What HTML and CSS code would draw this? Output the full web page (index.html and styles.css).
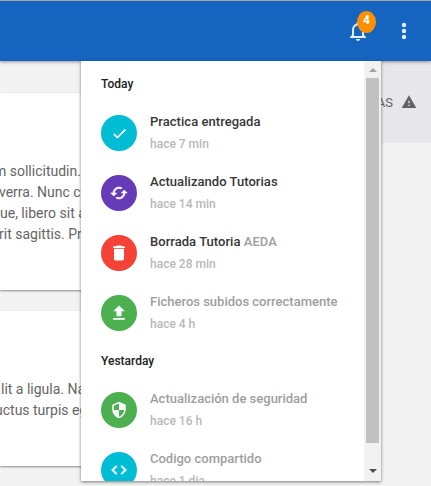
FILE: index.html
```html
<!DOCTYPE html>
<html lang="es">
<head>
<meta charset="utf-8">
<title>Notificaciones</title>
<link rel="stylesheet" href="styles.css">
</head>
<body>
<header class="topbar">
  <div class="bell">
    <svg width="24" height="24" viewBox="0 0 24 24"><path d="M12 22c1.100 0 2-.9 2-2h-4c0 1.100.9 2 2 2zm6-6v-5c0-3.070-1.630-5.640-4.500-6.320V4c0-.83-.67-1.500-1.500-1.500s-1.500.67-1.500 1.500v.68C7.640 5.360 6 7.920 6 11v5l-2 2v1h16v-1l-2-2zm-2 1H8v-6c0-2.480 1.510-4.500 4-4.500s4 2.020 4 4.500v6z"/></svg>
    <span class="badge">4</span>
  </div>
  <svg class="more" width="24" height="24" viewBox="0 0 24 24"><circle cx="12" cy="6" r="2.200"/><circle cx="12" cy="12" r="2.200"/><circle cx="12" cy="18" r="2.200"/></svg>
</header>
<main class="page">
  <div class="cards">
    <article class="card first">
      <p class="a1">m sollicitudin.</p>
      <p class="a2">verra. Nunc cursus</p>
      <p class="a3">ue, libero sit amet</p>
      <p class="a4">rit sagittis. Praesent</p>
    </article>
    <article class="card second">
      <p class="b1">lit a ligula. Nam</p>
      <p class="b2">uctus turpis eget</p>
    </article>
  </div>
  <aside class="tab"><span>AS</span><svg width="16" height="16" viewBox="0 0 24 24"><path d="M1 21h22L12 2 1 21zm12-3h-2v-2h2v2zm0-4h-2v-4h2v4z"/></svg></aside>
</main>
<section class="menu">
  <div class="list">
    <h2>Today</h2>
    <div class="item">
      <span class="avatar cyan"><svg class="bold check" viewBox="0 0 24 24"><path d="M9 16.170L4.830 12l-1.420 1.410L9 19 21 7l-1.410-1.410z"/></svg></span>
      <div><h3>Practica entregada</h3><time>hace 7 min</time></div>
    </div>
    <div class="item">
      <span class="avatar purple"><svg class="bold" viewBox="0 0 24 24"><path d="M19 8l-4 4h3c0 3.310-2.690 6-6 6-1.010 0-1.970-.25-2.800-.7l-1.460 1.460C8.970 19.540 10.430 20 12 20c4.420 0 8-3.580 8-8h3l-4-4zM6 12c0-3.310 2.690-6 6-6 1.010 0 1.970.25 2.800.7l1.460-1.460C15.030 4.460 13.570 4 12 4c-4.420 0-8 3.580-8 8H1l4 4 4-4H6z"/></svg></span>
      <div><h3>Actualizando Tutorias</h3><time>hace 14 min</time></div>
    </div>
    <div class="item">
      <span class="avatar red"><svg class="large" viewBox="0 0 24 24"><path d="M6 19c0 1.100.9 2 2 2h8c1.100 0 2-.9 2-2V7H6v12zM19 4h-3.500l-1-1h-5l-1 1H5v2h14V4z"/></svg></span>
      <div><h3>Borrada Tutoria <span>AEDA</span></h3><time>hace 28 min</time></div>
    </div>
    <div class="item read">
      <span class="avatar green"><svg class="large" viewBox="0 0 24 24"><path d="M9 16h6v-6h4l-7-7-7 7h4zm-4 2h14v2H5z"/></svg></span>
      <div><h3>Ficheros subidos correctamente</h3><time>hace 4 h</time></div>
    </div>
    <h2 class="next">Yestarday</h2>
    <div class="item read">
      <span class="avatar green"><svg viewBox="0 0 24 24"><path d="M12 1L3 5v6c0 5.550 3.840 10.740 9 12 5.160-1.260 9-6.450 9-12V5l-9-4zm0 10.990h7c-.53 4.120-3.280 7.790-7 8.940V12H5V6.300l7-3.110v8.800z"/></svg></span>
      <div><h3>Actualización de seguridad</h3><time>hace 16 h</time></div>
    </div>
    <div class="item read">
      <span class="avatar cyan"><svg class="bold" viewBox="0 0 24 24"><path d="M9.400 16.600L4.800 12l4.600-4.600L8 6l-6 6 6 6 1.400-1.400zm5.200 0l4.600-4.600-4.600-4.600L16 6l6 6-6 6-1.400-1.400z"/></svg></span>
      <div><h3>Codigo compartido</h3><time>hace 1 dia</time></div>
    </div>
  </div>
  <div class="scrollbar">
    <svg class="up" width="8" height="4" viewBox="0 0 8 4"><path d="M0 4L4 0l4 4z"/></svg>
    <div class="thumb"></div>
    <svg class="down" width="8" height="4" viewBox="0 0 8 4"><path d="M0 0h8L4 4z"/></svg>
  </div>
</section>
</body>
</html>
```

FILE: styles.css
```css
* { box-sizing: border-box; }
body {
  margin: 0;
  width: 431px;
  height: 486px;
  overflow: hidden;
  position: relative;
  background: #f2f2f2;
  font-family: Roboto, "Liberation Sans", sans-serif;
}
h2, h3, p { margin: 0; }
svg { display: block; flex: none; }

.topbar {
  position: relative;
  z-index: 1;
  height: 61px;
  border-top: 1px solid #a9a9a9;
  padding-right: 15px;
  display: flex;
  align-items: center;
  justify-content: flex-end;
  gap: 22px;
  background: #1565c0;
  box-shadow: 0 1px 3px rgba(0, 0, 0, .4);
}
.topbar svg { fill: #e3edf8; }
.bell { position: relative; }
.badge {
  position: absolute;
  left: 11px;
  top: -8px;
  width: 19px;
  height: 22px;
  border-radius: 50%;
  background: #ff8f00;
  color: #fff;
  font-size: 12px;
  font-weight: 700;
  line-height: 19px;
  text-align: center;
}

.page { display: flex; justify-content: space-between; height: 425px; }
.cards { width: 200px; padding-top: 32px; }
.card {
  background: #fff;
  box-shadow: 0 1px 2px rgba(0, 0, 0, .42);
  color: #656565;
  font-size: 14px;
  line-height: 21px;
  white-space: nowrap;
  overflow: hidden;
}
.first { height: 197px; padding-top: 68px; }
.second { height: 155px; padding-top: 68px; margin-top: 21px; }
.a1 { text-indent: -6px; }
.a2 { text-indent: -1px; }
.a3 { text-indent: 0; }
.a4 { text-indent: -1px; }
.b1 { text-indent: 1px; }
.b2 { text-indent: -5px; }
.tab {
  width: 61px;
  height: 82px;
  padding-right: 14px;
  display: flex;
  align-items: center;
  justify-content: flex-end;
  gap: 8px;
  background: #e7e7e9;
  color: #656565;
  font-size: 13px;
}
.tab svg { fill: #626262; }

.menu {
  position: absolute;
  z-index: 2;
  left: 81px;
  top: 61px;
  width: 300px;
  height: 420px;
  display: flex;
  background: #fff;
  box-shadow: 0 1px 3px rgba(0, 0, 0, .5);
}
.list { flex: 1; height: 420px; overflow: hidden; padding-left: 20px; }
.list h2 {
  height: 45px;
  padding-top: 15px;
  color: #212121;
  font-size: 12px;
  font-weight: 500;
  line-height: 16px;
}
.list .next { height: 37px; padding-top: 7px; }
.item { height: 60px; display: flex; gap: 13px; padding-top: 9px; white-space: nowrap; }
.avatar {
  width: 36px;
  height: 36px;
  border-radius: 50%;
  display: flex;
  align-items: center;
  justify-content: center;
}
.avatar svg { width: 18px; height: 18px; fill: #fff; }
.avatar .bold { stroke: #fff; stroke-width: .8; }
.avatar .check { width: 17px; height: 17px; stroke-width: .5; }
.avatar .large { width: 20px; height: 20px; }
.cyan { background: #00bcd4; }
.purple { background: #673ab7; }
.red { background: #f44336; }
.green { background: #4caf50; }
.item h3 { color: #363636; font-size: 13px; font-weight: 500; line-height: 14px; letter-spacing: .04px; }
.item h3 span, .read h3 { color: #9e9e9e; }
.item.read h3 { color: #9e9e9e; letter-spacing: 0; }
.item time { display: block; margin-top: 8px; color: #b8b8b8; font-size: 12px; font-weight: 500; line-height: 14px; }

.scrollbar {
  width: 17px;
  padding: 7px 2px 8px;
  display: flex;
  flex-direction: column;
  align-items: center;
  background: #f1f1f1;
}
.thumb { width: 13px; height: 365px; margin-top: 6px; background: #c1c1c1; }
.up { fill: #a3a3a3; }
.down { fill: #505050; margin-top: auto; }
```
